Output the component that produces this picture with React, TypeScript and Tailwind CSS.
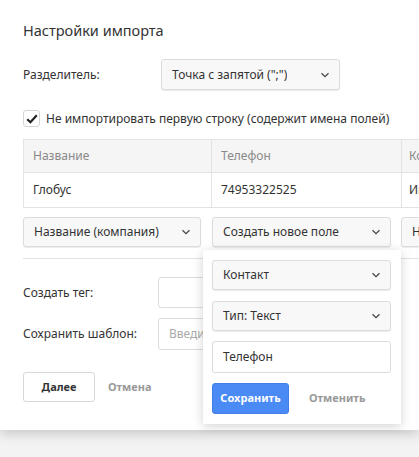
import React from 'react';

function Chevron() {
  return (
    <svg width="10" height="6" viewBox="0 0 10 6" className="shrink-0">
      <path d="M1.5 1.2 L5 4.6 L8.5 1.2" fill="none" stroke="#444" strokeWidth="1.2" />
    </svg>
  );
}

function Select({ label, className = '' }: { label: string; className?: string }) {
  return (
    <div
      className={`flex items-center justify-between h-[30px] pl-[10px] pr-[9px] rounded-[3px] border border-[#dcdcdc] bg-[#f8f8f8] shadow-[0_1px_1px_rgba(0,0,0,0.08)] text-[#333] ${className}`}
    >
      <span className="truncate">{label}</span>
      <Chevron />
    </div>
  );
}

export default function App() {
  return (
    <div
      className="relative w-[419px] h-[457px] overflow-hidden bg-[#f3f3f3] text-[12px] text-[#333]"
      style={{ fontFamily: '"Noto Sans", "Open Sans", sans-serif' }}
    >
      <div className="h-[430px] bg-white pl-[23px] pt-[19px] shadow-[0_3px_12px_rgba(0,0,0,0.2)] overflow-hidden">
        <div className="text-[14.5px] leading-[22px] text-[#333]">Настройки импорта</div>

        <div className="flex items-center mt-[18px]">
          <span className="w-[138px]">Разделитель:</span>
          <Select label={'Точка с запятой (";")'} className="w-[179px] h-[31px]" />
        </div>

        <div className="flex items-center mt-[20px] h-[17px]">
          <div className="w-[17px] h-[17px] rounded-[3px] border border-[#d5d5d5] flex items-center justify-center">
            <svg width="12" height="10" viewBox="0 0 12 10">
              <path d="M1.2 5.2 L4.4 8.2 L10.8 1.2" fill="none" stroke="#222" strokeWidth="2.2" />
            </svg>
          </div>
          <span className="ml-[6px] whitespace-nowrap">Не импортировать первую строку (содержит имена полей)</span>
        </div>

        <div className="mt-[12px] w-[500px]">
          <div className="flex h-[34px] bg-[#f5f5f5] border border-[#e3e3e3] text-[#888]">
            <div className="w-[188px] pl-[9px] flex items-center border-r border-[#e3e3e3]">Название</div>
            <div className="w-[190px] pl-[9px] flex items-center border-r border-[#e3e3e3]">Телефон</div>
            <div className="flex-1 pl-[7px] flex items-center">Компания</div>
          </div>
          <div className="flex h-[35px] border-x border-b border-[#e3e3e3]">
            <div className="w-[188px] pl-[9px] flex items-center border-r border-[#e3e3e3]">Глобус</div>
            <div className="w-[190px] pl-[9px] flex items-center border-r border-[#e3e3e3]">74953322525</div>
            <div className="flex-1 pl-[7px] flex items-center">Иванов</div>
          </div>
        </div>

        <div className="flex mt-[9px] w-[600px]">
          <Select label="Название (компания)" className="w-[178px]" />
          <Select label="Создать новое поле" className="w-[179px] ml-[11px]" />
          <Select label="Новое поле" className="w-[179px] ml-[10px]" />
        </div>

        <div className="mt-[11px] h-px bg-[#e3e3e3] w-[500px]" />

        <div className="flex items-center mt-[18px]">
          <span className="w-[135px]">Создать тег:</span>
          <div className="w-[240px] h-[31px] rounded-[3px] border border-[#dcdcdc]" />
        </div>
        <div className="flex items-center mt-[10px]">
          <span className="w-[135px]">Сохранить шаблон:</span>
          <div className="w-[240px] h-[32px] rounded-[3px] border border-[#dcdcdc] flex items-center pl-[10px] text-[#aaa]">
            Введите название шаблона
          </div>
        </div>

        <div className="flex items-center mt-[22px]">
          <div className="w-[72px] h-[30px] rounded-[3px] border border-[#d8d8d8] flex items-center justify-center font-bold text-[#333] text-[11px]">
            Далее
          </div>
          <span className="ml-[13px] font-bold text-[#999] text-[11px]">Отмена</span>
        </div>
      </div>

      <div className="absolute left-[203px] top-[250px] w-[198px] h-[174px] bg-white px-[9px] pt-[10px] shadow-[0_2px_10px_rgba(0,0,0,0.18)]">
        <Select label="Контакт" className="w-[179px]" />
        <Select label="Тип: Текст" className="w-[179px] mt-[11px]" />
        <div className="w-[179px] h-[32px] mt-[10px] rounded-[3px] border border-[#dcdcdc] flex items-center pl-[10px]">
          Телефон
        </div>
        <div className="flex items-center mt-[10px]">
          <div className="w-[77px] h-[31px] rounded-[3px] bg-[#4a8af4] border border-[#3f7ee6] flex items-center justify-center font-bold text-white text-[11px]">
            Сохранить
          </div>
          <span className="ml-[20px] font-bold text-[#999] text-[11px]">Отменить</span>
        </div>
      </div>
    </div>
  );
}
